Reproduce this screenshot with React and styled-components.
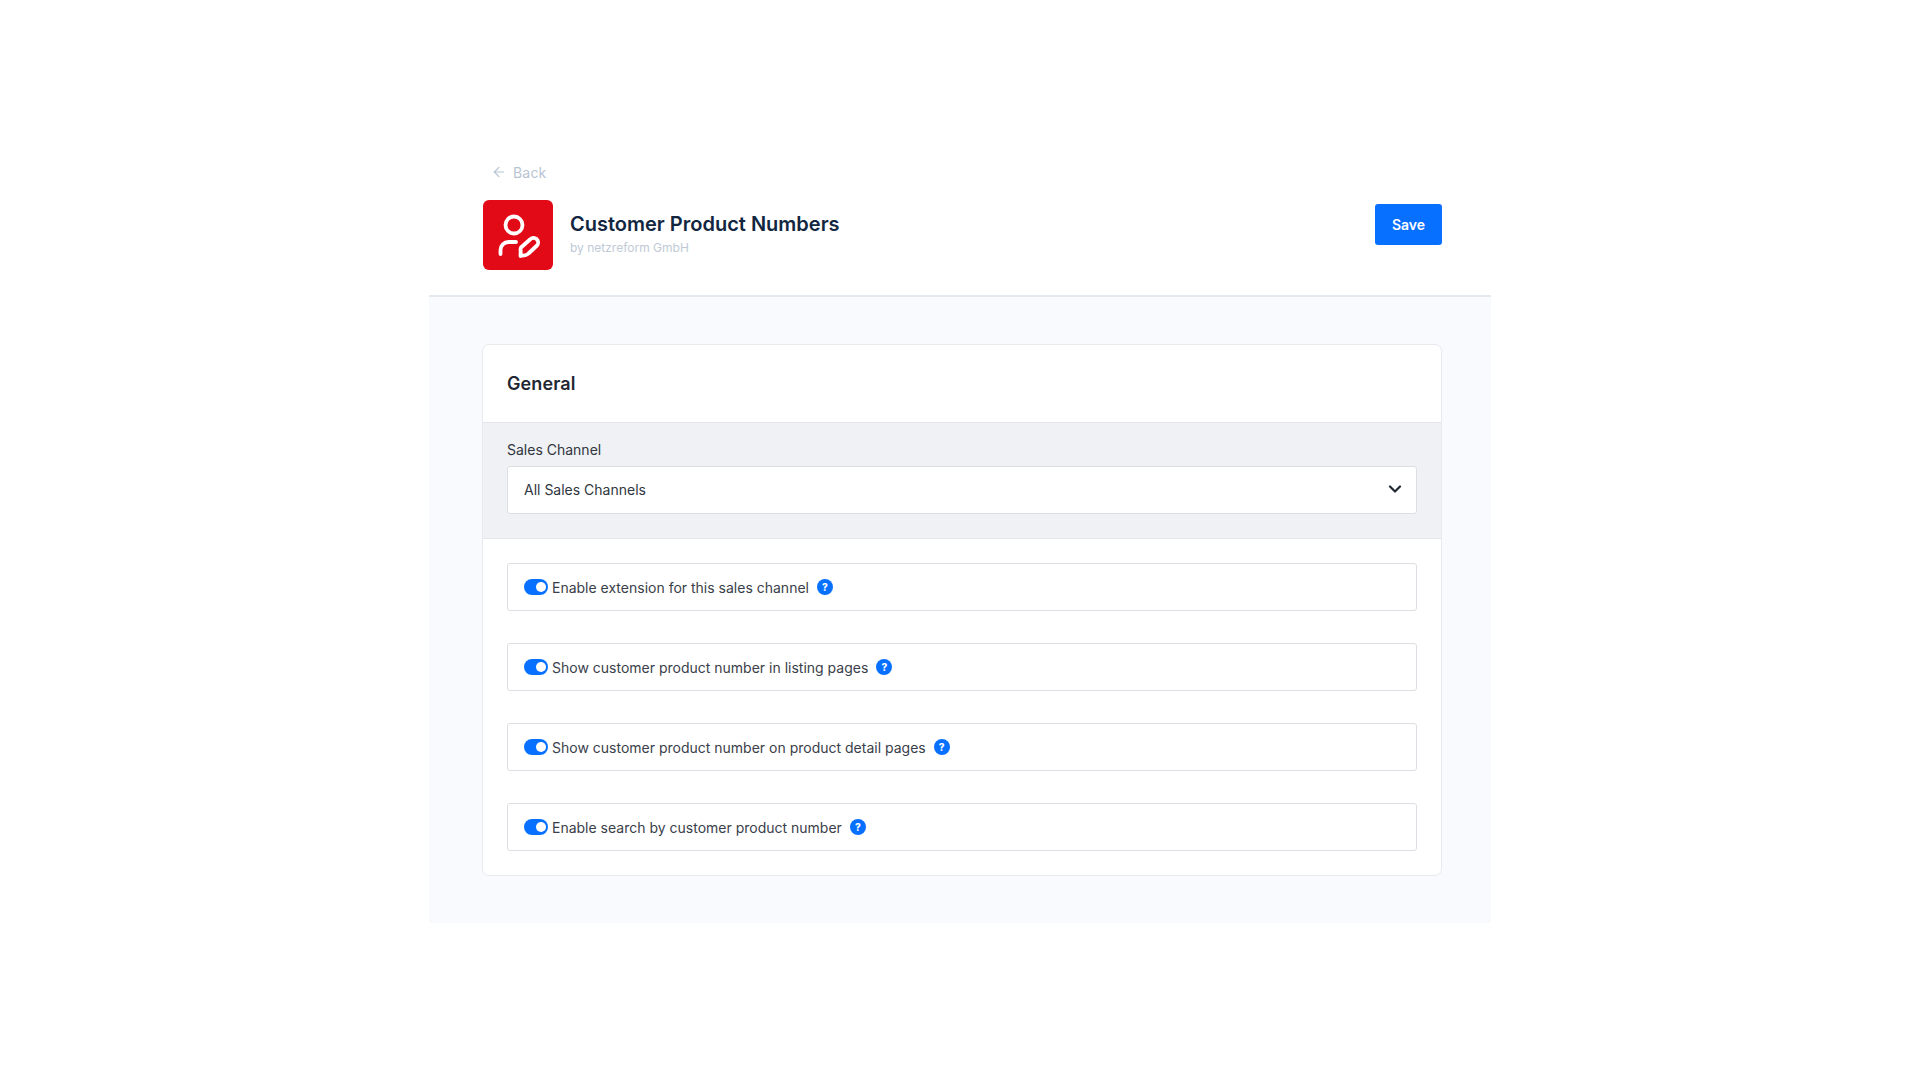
import React from 'react'
import styled, { createGlobalStyle } from 'styled-components'
import { ArrowLeft, ChevronDown } from 'lucide-react'

const Global = createGlobalStyle`
  body {
    margin: 0;
    background: #fff;
    font-family: Inter, "Liberation Sans", sans-serif;
    -webkit-font-smoothing: antialiased;
  }
`
const Panel = styled.div`
  width: 1062px;
  margin: 160px auto 0;
`
const Top = styled.div`
  height: 137px;
  box-sizing: border-box;
  padding: 0 49px 0 54px;
  border-bottom: 2px solid #e4e8ef;
`
const Back = styled.a`
  display: flex;
  align-items: center;
  gap: 6px;
  height: 24px;
  margin-left: 8px;
  color: #b8c4d2;
  font-size: 14px;
  letter-spacing: 0.2px;
`
const TitleRow = styled.div`
  display: flex;
  align-items: flex-start;
  margin-top: 16px;
`
const Logo = styled.svg`
  width: 70px;
  height: 70px;
  flex: none;
`
const Titles = styled.div`
  flex: 1;
  margin-left: 17px;
  padding-top: 12px;
`
const Title = styled.h1`
  margin: 0;
  color: #12263f;
  font-size: 20px;
  line-height: 24px;
  font-weight: 600;
`
const By = styled.div`
  margin-top: 4px;
  color: #c0cad6;
  font-size: 12px;
  line-height: 16px;
`
const Save = styled.button`
  width: 67px;
  height: 41px;
  margin-top: 4px;
  border: none;
  border-radius: 3px;
  background: #0870ff;
  color: #fff;
  font-family: inherit;
  font-size: 14px;
  font-weight: 600;
`
const Content = styled.div`
  background: #f9fafd;
  padding: 47px 49px 47px 53px;
`
const Card = styled.section`
  background: #fff;
  border: 1px solid #e8eaee;
  border-radius: 7px;
  overflow: hidden;
`
const CardHead = styled.h2`
  margin: 0;
  height: 77px;
  box-sizing: border-box;
  padding: 0 24px;
  display: flex;
  align-items: center;
  color: #1f2733;
  font-size: 18px;
  font-weight: 600;
  letter-spacing: 0.1px;
`
const Filter = styled.div`
  background: #f0f1f5;
  border-top: 1px solid #e4e6eb;
  border-bottom: 1px solid #e4e6eb;
  padding: 17px 24px 24px;
`
const Label = styled.label`
  display: block;
  color: #2f3640;
  font-size: 14px;
  line-height: 20px;
  margin-bottom: 6px;
`
const Select = styled.div`
  height: 48px;
  box-sizing: border-box;
  padding: 0 11px 2px 16px;
  display: flex;
  align-items: center;
  justify-content: space-between;
  background: #fff;
  border: 1px solid #dcdee3;
  border-radius: 3px;
  color: #2f3640;
  font-size: 14px;
`
const Rows = styled.div`
  display: flex;
  flex-direction: column;
  gap: 32px;
  padding: 24px;
`
const Row = styled.div`
  height: 48px;
  box-sizing: border-box;
  padding: 0 16px;
  display: flex;
  align-items: center;
  background: #fff;
  border: 1px solid #dcdee3;
  border-radius: 3px;
  color: #3a404a;
  font-size: 14px;
`
const Toggle = styled.span`
  position: relative;
  width: 24px;
  height: 16px;
  flex: none;
  margin-right: 4px;
  border-radius: 8px;
  background: #0870ff;
  &::after {
    content: '';
    position: absolute;
    top: 3px;
    right: 2px;
    width: 10px;
    height: 10px;
    border-radius: 50%;
    background: #fff;
  }
`
const Help = styled.span`
  width: 16px;
  height: 16px;
  margin-left: 8px;
  flex: none;
  border-radius: 50%;
  background: #0870ff;
  color: #fff;
  font-size: 10px;
  font-weight: 800;
  line-height: 16px;
  text-align: center;
`

const options = [
  'Enable extension for this sales channel',
  'Show customer product number in listing pages',
  'Show customer product number on product detail pages',
  'Enable search by customer product number',
]

const App = () => (
  <Panel>
    <Global />
    <Top>
      <Back><ArrowLeft size={16} strokeWidth={1.8} />Back</Back>
      <TitleRow>
        <Logo viewBox="0 0 70 70">
          <rect width="70" height="70" rx="6" fill="#e30a17" />
          <g fill="none" stroke="#fff" strokeWidth="3.8" strokeLinecap="round" strokeLinejoin="round">
            <circle cx="31" cy="25" r="8.5" />
            <path d="M17.5 54v-4a8 8 0 0 1 8-8h7.5" />
            <path d="M38 47.5 47 39.5a4.6 4.6 0 0 1 7 6L45.5 53.5a6 6 0 0 1-3 1.6L37.5 56l.2-5a5 5 0 0 1 .3-3.5z" />
          </g>
        </Logo>
        <Titles>
          <Title>Customer Product Numbers</Title>
          <By>by netzreform GmbH</By>
        </Titles>
        <Save>Save</Save>
      </TitleRow>
    </Top>
    <Content>
      <Card>
        <CardHead>General</CardHead>
        <Filter>
          <Label>Sales Channel</Label>
          <Select>
            All Sales Channels
            <ChevronDown size={20} color="#1f2733" strokeWidth={2.6} />
          </Select>
        </Filter>
        <Rows>
          {options.map(text => (
            <Row key={text}>
              <Toggle />
              {text}
              <Help>?</Help>
            </Row>
          ))}
        </Rows>
      </Card>
    </Content>
  </Panel>
)

export default App
